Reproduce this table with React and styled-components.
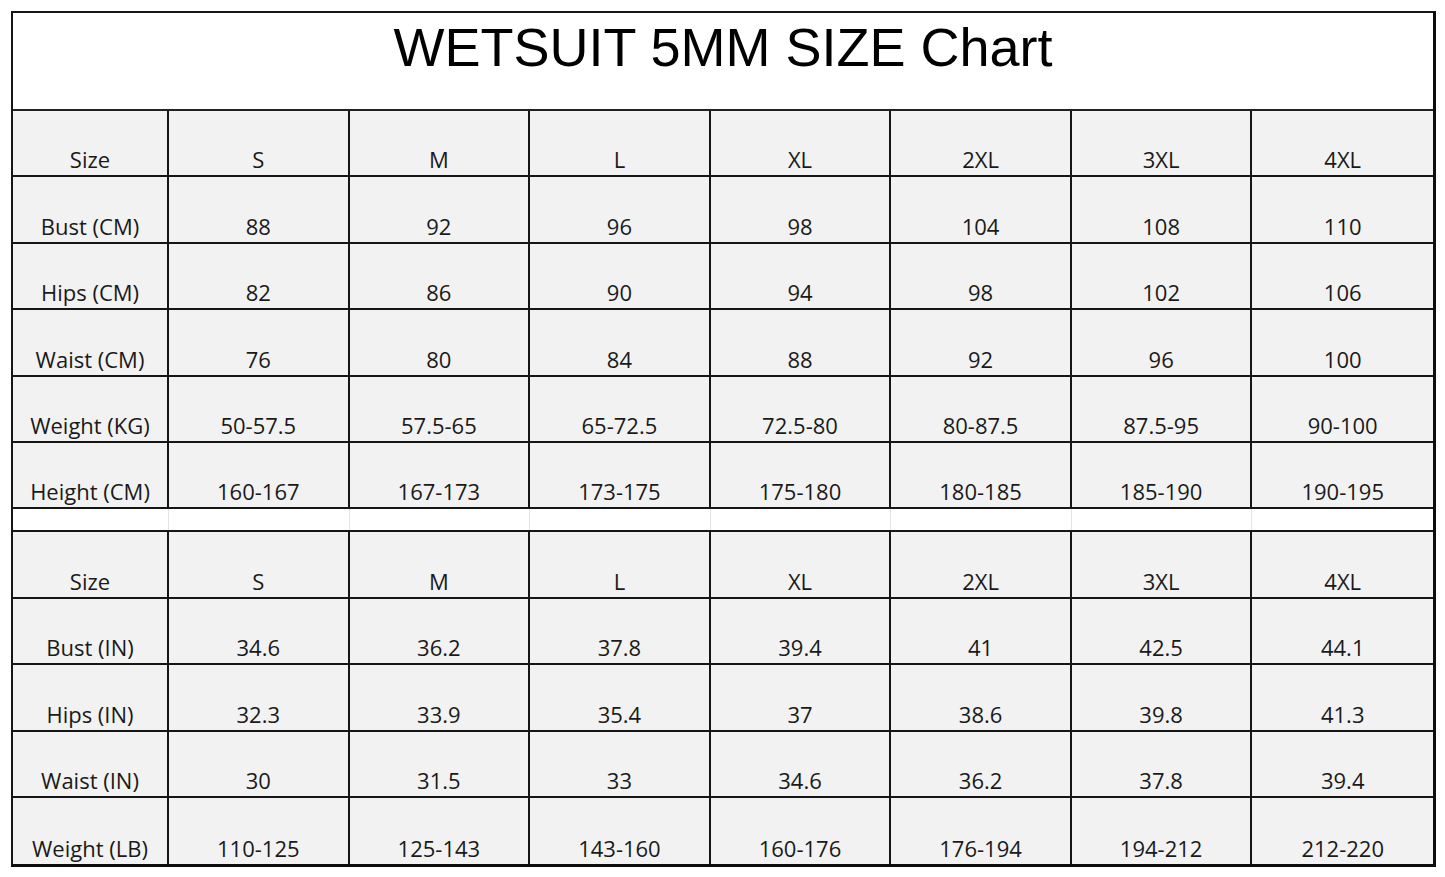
import React from 'react'
import styled, { createGlobalStyle } from 'styled-components'

const GlobalStyle = createGlobalStyle`
  html, body {
    margin: 0;
    padding: 0;
    background: #ffffff;
  }
`

const SIZES = ['S', 'M', 'L', 'XL', '2XL', '3XL', '4XL']

const METRIC = [
  ['Bust (CM)', '88', '92', '96', '98', '104', '108', '110'],
  ['Hips (CM)', '82', '86', '90', '94', '98', '102', '106'],
  ['Waist (CM)', '76', '80', '84', '88', '92', '96', '100'],
  ['Weight (KG)', '50-57.5', '57.5-65', '65-72.5', '72.5-80', '80-87.5', '87.5-95', '90-100'],
  ['Height (CM)', '160-167', '167-173', '173-175', '175-180', '180-185', '185-190', '190-195']
]

const IMPERIAL = [
  ['Bust (IN)', '34.6', '36.2', '37.8', '39.4', '41', '42.5', '44.1'],
  ['Hips (IN)', '32.3', '33.9', '35.4', '37', '38.6', '39.8', '41.3'],
  ['Waist (IN)', '30', '31.5', '33', '34.6', '36.2', '37.8', '39.4'],
  ['Weight (LB)', '110-125', '125-143', '143-160', '160-176', '176-194', '194-212', '212-220']
]

export default function App () {
  const renderGroup = (rows, key, last) => (
    <>
      <Row key={`${key}-head`}>
        <Cell>Size</Cell>
        {SIZES.map(s => <Cell key={s}>{s}</Cell>)}
      </Row>
      {rows.map((row, i) => (
        <Row key={`${key}-${i}`} last={last && i === rows.length - 1}>
          {row.map((v, j) => <Cell key={j}>{v}</Cell>)}
        </Row>
      ))}
    </>
  )

  return (
    <Page>
      <GlobalStyle />
      <Chart>
        <Title>WETSUIT 5MM SIZE Chart</Title>
        {renderGroup(METRIC, 'cm', false)}
        <Spacer>
          {Array.from({ length: 8 }).map((_, i) => <SpacerCell key={i} />)}
        </Spacer>
        {renderGroup(IMPERIAL, 'in', true)}
      </Chart>
    </Page>
  )
}

const Page = styled.div`
  padding: 11px 0 0 11px;
  width: 1445px;
  height: 877px;
  box-sizing: border-box;
  overflow: hidden;
`

const Chart = styled.div`
  width: 1425px;
  box-sizing: border-box;
  border-top: 2px solid #161616;
  border-left: 2px solid #161616;
  border-right: 3px solid #0d0d0d;
  border-bottom: 3px solid #0d0d0d;
  display: flex;
  flex-direction: column;
`

const Title = styled.div`
  height: 98px;
  box-sizing: border-box;
  border-bottom: 2px solid #222;
  background: #ffffff;
  display: flex;
  align-items: center;
  justify-content: center;
  padding-bottom: 29px;
  font-family: 'Liberation Sans', Arial, sans-serif;
  font-size: 54px;
  color: #000;
`

const Row = styled.div`
  display: grid;
  grid-template-columns: 156px repeat(7, 1fr);
  height: 66.4px;
  box-sizing: border-box;
  border-bottom: ${p => (p.last ? '0' : '2px solid #161616')};
`

const Cell = styled.div`
  background: #f2f2f2;
  border-right: 2px solid #161616;
  display: flex;
  align-items: flex-end;
  justify-content: center;
  padding-bottom: 5px;
  font-family: 'Open Sans', 'Noto Sans', sans-serif;
  font-size: 22px;
  color: #1a1a1a;
  line-height: 1;
  &:last-child {
    border-right: 0;
  }
`

const Spacer = styled.div`
  display: grid;
  grid-template-columns: 156px repeat(7, 1fr);
  height: 23px;
  box-sizing: border-box;
  border-bottom: 2px solid #161616;
  background: #ffffff;
`

const SpacerCell = styled.div`
  border-right: 1px solid #e4e4e4;
  &:last-child {
    border-right: 0;
  }
`
